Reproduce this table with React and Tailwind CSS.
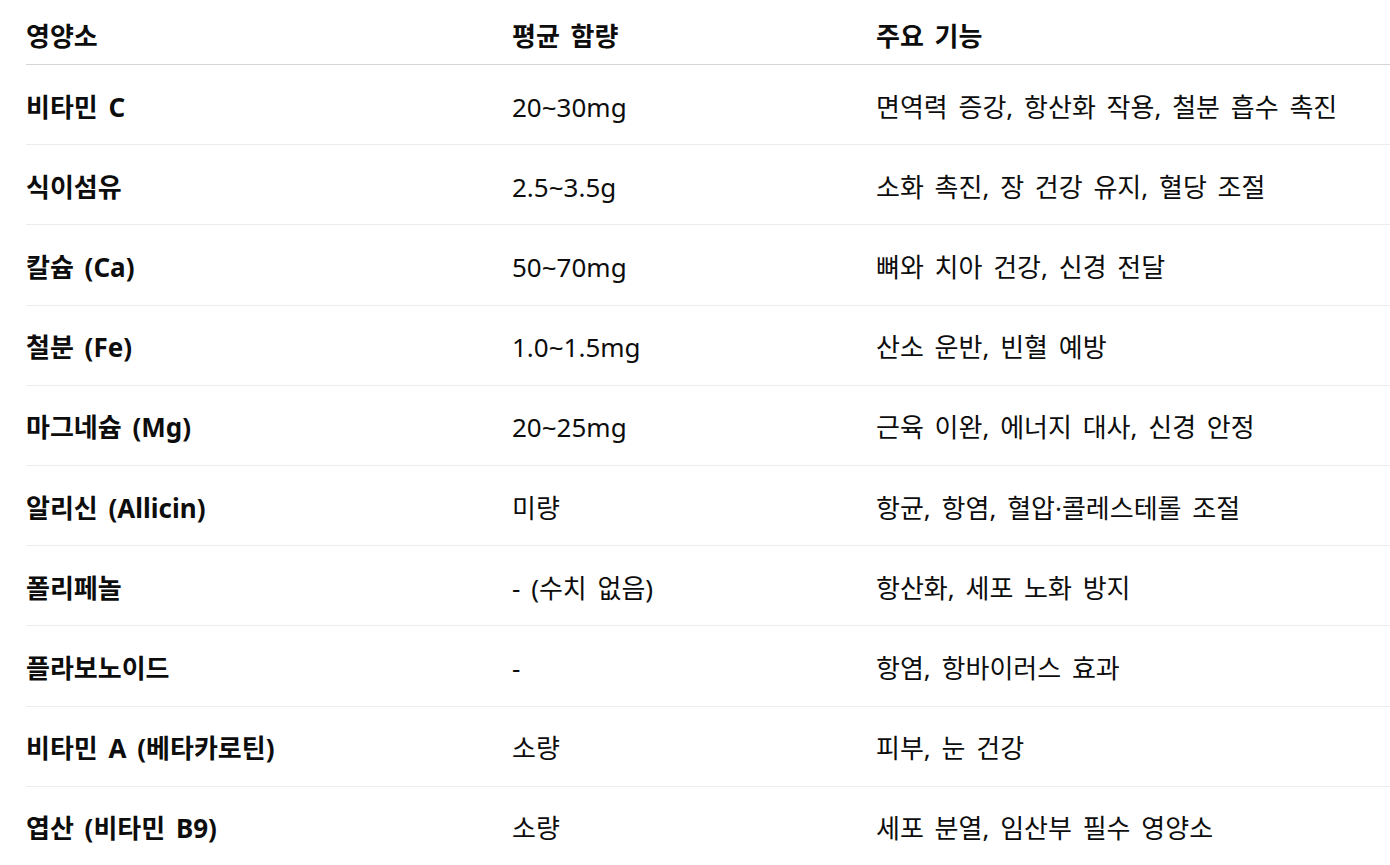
import React from "react";

const rows = [
  ["비타민 C", "20~30mg", "면역력 증강, 항산화 작용, 철분 흡수 촉진"],
  ["식이섬유", "2.5~3.5g", "소화 촉진, 장 건강 유지, 혈당 조절"],
  ["칼슘 (Ca)", "50~70mg", "뼈와 치아 건강, 신경 전달"],
  ["철분 (Fe)", "1.0~1.5mg", "산소 운반, 빈혈 예방"],
  ["마그네슘 (Mg)", "20~25mg", "근육 이완, 에너지 대사, 신경 안정"],
  ["알리신 (Allicin)", "미량", "항균, 항염, 혈압·콜레스테롤 조절"],
  ["폴리페놀", "- (수치 없음)", "항산화, 세포 노화 방지"],
  ["플라보노이드", "-", "항염, 항바이러스 효과"],
  ["비타민 A (베타카로틴)", "소량", "피부, 눈 건강"],
  ["엽산 (비타민 B9)", "소량", "세포 분열, 임산부 필수 영양소"],
];

export default function App() {
  return (
    <div
      className="bg-white text-[#0d0d0d] w-[1390px] h-[865px] overflow-hidden"
      style={{ fontFamily: '"Noto Sans", "Noto Sans CJK KR", sans-serif' }}
    >
      <div className="ml-[26px] text-[26px] leading-[34px] [word-spacing:4px]">
        <div className="grid grid-cols-[486px_364px_1fr] h-[65px] items-center pt-[8px] border-b border-[#d6d6d6] font-bold">
          <div>영양소</div>
          <div>평균 함량</div>
          <div>주요 기능</div>
        </div>
        {rows.map((r, i) => (
          <div
            key={i}
            className="grid grid-cols-[486px_364px_1fr] h-[80.2px] items-center pt-[4px] border-b border-[#ececec]"
          >
            <div className="font-bold">{r[0]}</div>
            <div>{r[1]}</div>
            <div>{r[2]}</div>
          </div>
        ))}
      </div>
    </div>
  );
}
